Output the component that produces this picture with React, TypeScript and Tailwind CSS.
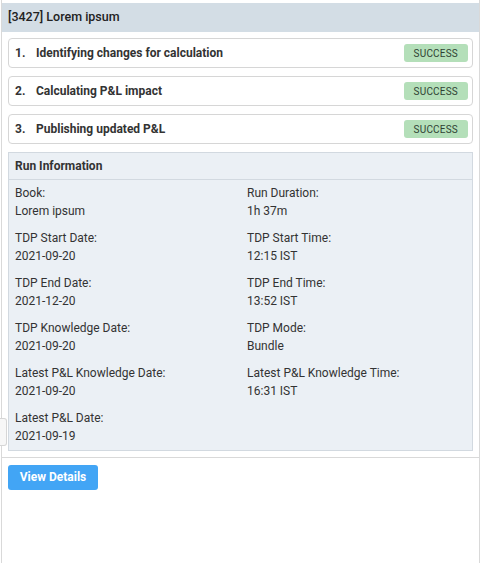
const steps = [
  "Identifying changes for calculation",
  "Calculating P&L impact",
  "Publishing updated P&L",
];

const info: [string, string][] = [
  ["Book:", "Lorem ipsum"],
  ["Run Duration:", "1h 37m"],
  ["TDP Start Date:", "2021-09-20"],
  ["TDP Start Time:", "12:15 IST"],
  ["TDP End Date:", "2021-12-20"],
  ["TDP End Time:", "13:52 IST"],
  ["TDP Knowledge Date:", "2021-09-20"],
  ["TDP Mode:", "Bundle"],
  ["Latest P&L Knowledge Date:", "2021-09-20"],
  ["Latest P&L Knowledge Time:", "16:31 IST"],
  ["Latest P&L Date:", "2021-09-19"],
];

export default function App() {
  return (
    <div
      className="relative w-[481px] h-[563px] bg-white text-[#333333] overflow-hidden"
      style={{ fontFamily: "Roboto, 'Liberation Sans', sans-serif" }}
    >
      {/* resize handle on the left edge */}
      <div className="absolute left-0 top-[418px] w-[7px] h-[28px] rounded-r-[3px] border border-l-0 border-[#d6d6d6] bg-[#f7f7f7]" />

      <div className="ml-[1px] w-[479px] h-full border-x border-[#d9d9d9] pt-[3px] flex flex-col">
        <div className="h-[29px] bg-[#d3dde5] flex items-center px-[6px] text-[12.5px] font-medium text-[#222]">
          [3427] Lorem ipsum
        </div>

        <div className="flex flex-col gap-[8px] pl-[6px] pr-[6px] pt-[6px]">
          {steps.map((s, i) => (
            <div
              key={s}
              className="h-[30px] border border-[#d6d6d6] rounded-[4px] flex items-center pl-[6px] pr-[4px]"
            >
              <span className="w-[21px] text-[12px] font-bold">{i + 1}.</span>
              <span className="flex-1 text-[12px] font-bold">{s}</span>
              <span className="h-[18px] px-[10px] rounded-[3px] bg-[#b4dfb9] text-[10px] text-[#2f3f33] flex items-center tracking-[0.2px]">
                SUCCESS
              </span>
            </div>
          ))}

          <div className="border border-[#d2d9e0] bg-[#ebf0f5]">
            <div className="h-[27px] border-b border-[#d2d9e0] flex items-center px-[6px] text-[12px] font-bold">
              Run Information
            </div>
            <div className="grid grid-cols-[232px_1fr] px-[6px] pt-[4px] pb-[5px] gap-y-[9px]">
              {info.map(([label, value]) => (
                <div key={label} className="text-[12px] leading-[18px]">
                  <div>{label}</div>
                  <div>{value}</div>
                </div>
              ))}
            </div>
          </div>
        </div>

        <div className="mt-[6px] border-t border-[#d9d9d9] px-[6px] pt-[6px]">
          <button className="h-[25px] w-[90px] rounded-[3px] bg-[#42a5f5] text-white text-[12px] font-bold">
            View Details
          </button>
        </div>
      </div>
    </div>
  );
}
